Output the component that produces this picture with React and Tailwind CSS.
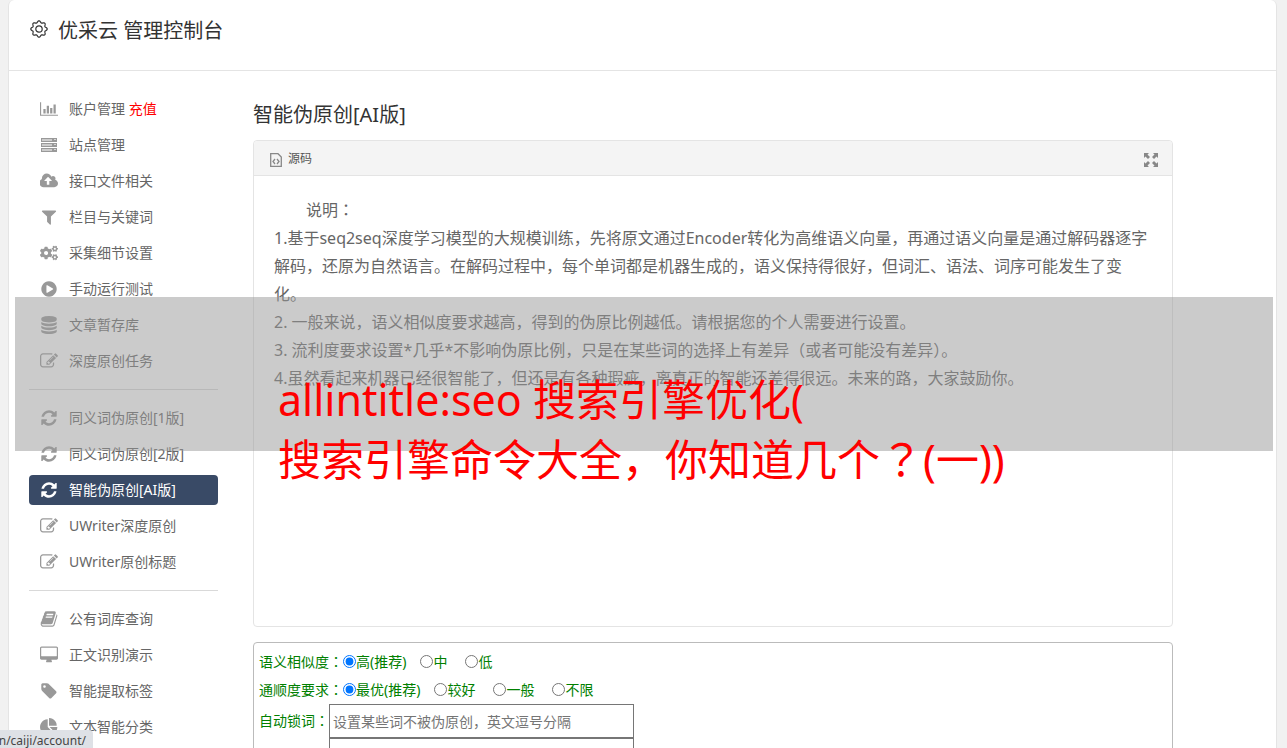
import React from "react";
import { FaCogs } from "react-icons/fa";

const ICONS = {
  chart: ["0 0 2048 1792", "M640 896v512h-256v-512h256zm384-384v896h-256v-896h256zm1024 1024v128h-2048v-1536h128v1408h1920zm-640-768v640h-256v-640h256zm384-384v1024h-256v-1024h256z"],
  upload: ["0 0 1856 1792", "M1216 864q0-14-9-23l-352-352q-9-9-23-9t-23 9l-351 351q-10 12-10 24 0 14 9 23t23 9h224v352q0 13 9.5 22.5t22.5 9.5h192q13 0 22.5-9.5t9.5-22.5v-352h224q13 0 22.5-9.5t9.5-22.5zm640 288q0 159-112.5 271.5t-271.5 112.5h-1088q-185 0-316.5-131.5t-131.5-316.5q0-130 70-240t188-165q-2-30-2-43 0-212 150-362t362-150q156 0 285.5 87t188.5 231q71-62 166-62 106 0 181 75t75 181q0 76-41 138 130 31 213.5 135.5t83.5 238.5z"],
  filter: ["0 0 1792 1792", "M1595 295q17 41-14 70l-493 493v742q0 42-39 59-13 5-25 5-27 0-45-19l-256-256q-19-19-19-45v-486l-493-493q-31-29-14-70 17-39 59-39h1280q42 0 59 39z"],
  play: ["0 0 1792 1792", "M896 128q209 0 385.5 103t279.5 279.5 103 385.5-103 385.5-279.5 279.5-385.5 103-385.5-103-279.5-279.5-103-385.5 103-385.5 279.5-279.5 385.5-103zm384 823q32-18 32-55t-32-55l-544-320q-31-19-64-1-32 19-32 56v640q0 37 32 56 16 8 32 8 17 0 32-9z"],
  database: ["0 0 1792 1792", "M896 768q237 0 443-43t325-127v170q0 69-103 128t-280 93.5-385 34.5-385-34.5-280-93.5-103-128v-170q119 84 325 127t443 43zm0 768q237 0 443-43t325-127v170q0 69-103 128t-280 93.5-385 34.5-385-34.5-280-93.5-103-128v-170q119 84 325 127t443 43zm0-384q237 0 443-43t325-127v170q0 69-103 128t-280 93.5-385 34.5-385-34.5-280-93.5-103-128v-170q119 84 325 127t443 43zm0-1152q208 0 385 34.5t280 93.5 103 128v128q0 69-103 128t-280 93.5-385 34.5-385-34.5-280-93.5-103-128v-128q0-69 103-128t280-93.5 385-34.5z"],
  edit: ["0 0 1792 1792", "M888 1184l116-116-152-152-116 116v56h96v96h56zm440-720q-16-16-33 1l-350 350q-17 17-1 33t33-1l350-350q17-17 1-33zm80 594v190q0 119-84.5 203.5t-203.5 84.5h-832q-119 0-203.5-84.5t-84.5-203.5v-832q0-119 84.5-203.5t203.5-84.5h832q63 0 117 25 15 7 18 23 3 17-9 29l-49 49q-14 14-32 8-23-6-45-6h-832q-66 0-113 47t-47 113v832q0 66 47 113t113 47h832q66 0 113-47t47-113v-126q0-13 9-22l64-64q15-15 35-7t20 29zm-96-738l288 288-672 672h-288v-288zm444 132l-92 92-288-288 92-92q28-28 68-28t68 28l152 152q28 28 28 68t-28 68z"],
  refresh: ["0 0 1792 1792", "M1639 1056q0 5-1 7-64 268-268 434.5t-478 166.5q-146 0-282.5-55t-243.5-157l-129 129q-19 19-45 19t-45-19-19-45v-448q0-26 19-45t45-19h448q26 0 45 19t19 45-19 45l-137 137q71 66 161 102t187 36q134 0 250-65t186-179q11-17 53-117 8-23 30-23h192q13 0 22.5 9.5t9.5 22.5zm25-800v448q0 26-19 45t-45 19h-448q-26 0-45-19t-19-45 19-45l138-138q-148-137-349-137-134 0-250 65t-186 179q-11 17-53 117-8 23-30 23h-199q-13 0-22.5-9.5t-9.5-22.5v-7q65-268 270-434.5t480-166.5q146 0 284 55.5t245 156.5l130-129q19-19 45-19t45 19 19 45z"],
  book: ["0 0 1792 1792", "M1703 478q40 57 18 129l-275 906q-19 64-76.5 107.5t-122.5 43.5h-923q-77 0-148.5-53.5t-99.5-131.5q-24-67-2-127 0-4 3-27t4-37q1-8-3-21.5t-3-19.5q2-11 8-21t16.5-23.5 16.5-23.5q23-38 45-91.5t30-91.5q3-10 .5-30t-.5-28q3-11 17-28t17-23q21-36 42-92t25-90q1-9-2.5-32t.5-28q4-13 22-30.5t22-22.5q19-26 42.5-84.5t27.5-96.5q1-8-3-25.5t-2-26.5q2-8 9-18t18-23 17-21q8-12 16.5-30.5t15-35 16-36 19.5-32 26.5-23.5 36-11.5 47.5 5.5l-1 3q38-9 51-9h761q74 0 114 56t18 130l-274 906q-36 119-71.5 153.5t-128.5 34.5h-869q-27 0-38 15-11 16-1 43 24 70 144 70h923q29 0 56-15.5t35-41.5l300-987q7-22 5-57 38 15 59 43zm-1064 2q-4 13 2 22.5t20 9.5h608q13 0 25.5-9.5t16.5-22.5l21-64q4-13-2-22.5t-20-9.5h-608q-13 0-25.5 9.5t-16.5 22.5zm-83 256q-4 13 2 22.5t20 9.5h608q13 0 25.5-9.5t16.5-22.5l21-64q4-13-2-22.5t-20-9.5h-608q-13 0-25.5 9.5t-16.5 22.5z"],
  desktop: ["-64 0 1920 1792", "M1728 992v-832q0-13-9.5-22.5t-22.5-9.5h-1600q-13 0-22.5 9.5t-9.5 22.5v832q0 13 9.5 22.5t22.5 9.5h1600q13 0 22.5-9.5t9.5-22.5zm128-832v1088q0 66-47 113t-113 47h-544q0 37 16 77.5t32 71 16 43.5q0 26-19 45t-45 19h-512q-26 0-45-19t-19-45q0-14 16-44t32-70 16-78h-544q-66 0-113-47t-47-113v-1088q0-66 47-113t113-47h1600q66 0 113 47t47 113z"],
  tag: ["0 0 1792 1792", "M576 448q0-53-37.5-90.5t-90.5-37.5-90.5 37.5-37.5 90.5 37.5 90.5 90.5 37.5 90.5-37.5 37.5-90.5zm1067 576q0 53-37 90l-491 492q-39 37-91 37-53 0-90-37l-715-716q-38-37-64.5-101t-26.5-117v-416q0-52 38-90t90-38h416q53 0 117 26.5t102 64.5l715 714q37 39 37 91z"],
  pie: ["0 0 1792 1792", "M768 890l546 546q-106 108-247.5 168t-298.5 60q-209 0-385.5-103t-279.5-279.5-103-385.5 103-385.5 279.5-279.5 385.5-103v762zm187 6h773q0 157-60 298.5t-168 247.5zm709-128h-768v-768q209 0 385.5 103t279.5 279.5 103 385.5z"],
};

// Outline of a gear with eight rounded teeth, centred in an 18-unit box.
const GEAR = Array.from({ length: 96 }, (_, i) => {
  const t = (i / 96) * Math.PI * 2;
  const r = 7.3 + 0.9 * Math.cos(8 * t);
  return (i ? "L" : "M") + (9 + r * Math.cos(t)).toFixed(2) + " " + (9 + r * Math.sin(t)).toFixed(2);
}).join("") + "z";

function ServerIcon() {
  return (
    <svg viewBox="0 0 18 14" className="h-3.5 w-[18px]" aria-hidden="true">
      {[0, 5, 10].map((y) => (
        <g key={y}>
          <rect x="1" y={y} width="16" height="4" fill="currentColor" />
          <rect x="2" y={y + 1} width="10" height="2" fill="#fff" opacity="0.5" />
          <rect x="14" y={y + 1} width="2" height="1" fill="#fff" opacity="0.6" />
        </g>
      ))}
    </svg>
  );
}

function Icon({ name }) {
  if (name === "cogs") return <FaCogs className="h-[18px] w-[18px]" aria-hidden="true" />;
  if (name === "server") return <ServerIcon />;
  const [box, d] = ICONS[name];
  return (
    <svg viewBox={box} className="h-[18px] w-[18px]" fill="currentColor" aria-hidden="true">
      <path d={d} />
    </svg>
  );
}

// Full-width punctuation set in the middle of its cell.
function Mark({ children }) {
  return (
    <span lang="ja" className="font-['Noto_Sans_CJK_JP',sans-serif] leading-none">
      {children}
    </span>
  );
}

const MENU = [
  [
    ["chart", "账户管理", "充值"],
    ["server", "站点管理"],
    ["upload", "接口文件相关"],
    ["filter", "栏目与关键词"],
    ["cogs", "采集细节设置"],
    ["play", "手动运行测试"],
    ["database", "文章暂存库"],
    ["edit", "深度原创任务"],
  ],
  [
    ["refresh", "同义词伪原创[1版]"],
    ["refresh", "同义词伪原创[2版]"],
    ["refresh", "智能伪原创[AI版]"],
    ["edit", "UWriter深度原创"],
    ["edit", "UWriter原创标题"],
  ],
  [
    ["book", "公有词库查询"],
    ["desktop", "正文识别演示"],
    ["tag", "智能提取标签"],
    ["pie", "文本智能分类"],
  ],
];
const ACTIVE = "智能伪原创[AI版]";

function Sidebar() {
  return (
    <nav className="w-[189px] shrink-0">
      {MENU.map((group, i) => (
        <ul key={i} className={i > 0 ? "mt-[7px] border-t border-[#d9d9d9] pt-[13px]" : ""}>
          {group.map(([icon, text, extra]) => (
            <li key={text} className="pb-1.5">
              <a
                href="#"
                aria-current={text === ACTIVE ? "page" : undefined}
                className={
                  "flex h-[30px] items-center gap-[11px] rounded pl-[11px] text-sm whitespace-nowrap " +
                  (text === ACTIVE ? "bg-[#394a66] text-white" : "text-[#666]")
                }
              >
                <span className={"flex w-[18px] justify-center " + (text === ACTIVE ? "" : "text-[#999]")}>
                  <Icon name={icon} />
                </span>
                <span>
                  {text}
                  {extra && <span className="text-[#f00]"> {extra}</span>}
                </span>
              </a>
            </li>
          ))}
        </ul>
      ))}
    </nav>
  );
}

function RadioRow({ legend, name, options }) {
  return (
    <div role="radiogroup" aria-labelledby={name + "-label"} className="flex h-7 items-center">
      <span id={name + "-label"}>
        {legend}
        <Mark>：</Mark>
      </span>
      <div className="flex gap-[14px]">
        {options.map((option, i) => (
          <label key={option} className={"flex items-center " + (i > 1 ? "ml-1" : "")}>
            <input type="radio" name={name} defaultChecked={i === 0} className="mb-0.5 h-[13px] w-[13px]" />
            {option}
          </label>
        ))}
      </div>
    </div>
  );
}

export default function App() {
  return (
    <div className="h-screen overflow-hidden bg-[#f1f1f1] px-2 font-['Noto_Sans','Noto_Sans_CJK_SC',sans-serif]">
      <div className="mr-0.5 min-h-screen rounded-t-md border-x border-[#e4e4e4] bg-white">
        <header className="flex h-[71px] items-start gap-2.5 border-b border-[#e4e4e4] pt-4 pl-[21px] text-[#333]">
          <svg viewBox="0 0 18 18" className="mt-1 h-[18px] w-[18px]" fill="none" stroke="currentColor" strokeWidth="1.2" aria-hidden="true">
            <circle cx="9" cy="9" r="3.2" />
            <path strokeLinejoin="round" d={GEAR} />
          </svg>
          <h1 className="text-xl leading-[30px]">优采云 管理控制台</h1>
        </header>

        <div className="flex gap-[35px] pt-[23px] pl-5">
          <Sidebar />
          <main className="min-w-0 max-w-[920px] flex-1">
            <h2 className="mb-2.5 pt-1.5 text-xl leading-[30px] text-[#333]">智能伪原创[AI版]</h2>

            <section className="rounded border border-[#e4e4e4]">
              <div className="flex h-[35px] items-center justify-between rounded-t border-b border-[#e4e4e4] bg-[#f4f4f4] pr-3.5 pl-4">
                <div className="flex items-center gap-1.5 pt-0.5 text-xs text-[#555]">
                  <svg viewBox="0 0 12 14" className="mt-0.5 h-3.5 w-3" fill="none" stroke="#888" strokeWidth="1.3" aria-hidden="true">
                    <path d="M.7.7H8L11.3 4v9.300H.7z" />
                    <path d="M5 6 3 8.500 5 11M7 6l2 2.500L7 11" />
                  </svg>
                  源码
                </div>
                <button type="button" aria-label="全屏" className="mt-1 text-[#888]">
                  <svg viewBox="0 0 14 14" className="h-3.5 w-3.5" fill="currentColor" aria-hidden="true">
                    <path d="M0 0h5L3.500 1.500 6 4 4 6 1.500 3.500 0 5zM14 0v5l-1.500-1.500L10 6 8 4l2.500-2.500L9 0zM0 14V9l1.500 1.500L4 8l2 2-2.500 2.500L5 14zM14 14H9l1.500-1.500L8 10l2-2 2.500 2.500L14 9z" />
                  </svg>
                </button>
              </div>
              <div className="min-h-[450px] px-5 pt-5 text-base leading-7 text-[#666]">
                <p className="indent-8">
                  说明<Mark>：</Mark>
                </p>
                <p>1.基于seq2seq深度学习模型的大规模训练，先将原文通过Encoder转化为高维语义向量，再通过语义向量是通过解码器逐字解码，还原为自然语言。在解码过程中，每个单词都是机器生成的，语义保持得很好，但词汇、语法、词序可能发生了变化。</p>
                <p>2. 一般来说，语义相似度要求越高，得到的伪原比例越低。请根据您的个人需要进行设置。</p>
                <p>3. 流利度要求设置*几乎*不影响伪原比例，只是在某些词的选择上有差异（或者可能没有差异）。</p>
                <p>4.虽然看起来机器已经很智能了，但还是有各种瑕疵，离真正的智能还差得很远。未来的路，大家鼓励你。</p>
              </div>
            </section>

            <form className="mt-[15px] rounded border border-[#bbb] px-[5px] pt-[5px] text-sm text-[#008000]">
              <RadioRow legend="语义相似度" name="similarity" options={["高(推荐)", "中", "低"]} />
              <RadioRow legend="通顺度要求" name="fluency" options={["最优(推荐)", "较好", "一般", "不限"]} />
              <div className="flex items-center">
                <label htmlFor="lock-words" className="w-[70px] whitespace-nowrap">
                  自动锁词<Mark>：</Mark>
                </label>
                <input
                  id="lock-words"
                  type="text"
                  placeholder="设置某些词不被伪原创，英文逗号分隔"
                  className="h-[34px] w-[305px] border border-[#767676] px-[3px] text-sm placeholder:text-[#757575]"
                />
              </div>
              <textarea aria-label="内容" className="ml-[70px] block h-[120px] w-[305px] resize-none border border-[#767676]" />
            </form>
          </main>
        </div>
      </div>

      <div className="absolute top-[297px] right-[14px] left-[15px] h-[154px] bg-[#979797]/50" />
      <p className="absolute top-[370px] left-[278px] text-[43px] leading-[60px] whitespace-nowrap text-[#f00]">
        allintitle:seo 搜索引擎优化(<br />
        搜索引擎命令大全，你知道几个<Mark>？</Mark>(一))
      </p>
      <div className="absolute bottom-0 left-0 flex h-[18px] w-[93px] justify-end overflow-hidden rounded-tr bg-[#dee1e6] pt-[3px] pr-[7px] text-xs whitespace-nowrap text-[#444]">
        n/caiji/account/
      </div>
    </div>
  );
}
